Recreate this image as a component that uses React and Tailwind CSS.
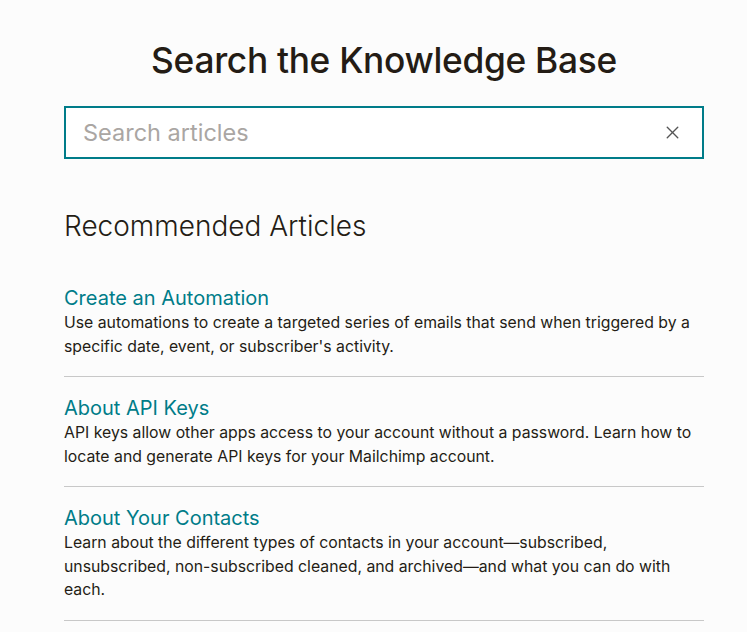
import { X } from 'lucide-react'

const articles = [
  {
    title: 'Create an Automation',
    text: "Use automations to create a targeted series of emails that send when triggered by a specific date, event, or subscriber's activity.",
  },
  {
    title: 'About API Keys',
    text: 'API keys allow other apps access to your account without a password. Learn how to locate and generate API keys for your Mailchimp account.',
  },
  {
    title: 'About Your Contacts',
    text: 'Learn about the different types of contacts in your account—subscribed, unsubscribed, non-subscribed cleaned, and archived—and what you can do with each.',
  },
]

export default function App() {
  return (
    <div className="min-h-screen bg-[#fcfcfc] text-[#241c15] font-['Inter',sans-serif]">
      <div className="w-[640px] ml-[64px] pt-[38px]">
        <h1 className="text-center text-[35.3px] leading-[46px] font-medium tracking-[-0.3px]">
          Search the Knowledge Base
        </h1>

        <div className="mt-[22px] h-[53px] border-2 border-[#007c89] bg-white flex items-center pl-[17px] pr-[20px]">
          <input
            className="flex-1 bg-transparent outline-none text-[23.5px] placeholder:text-[#aaa6a3]"
            placeholder="Search articles"
          />
          <X size={21} strokeWidth={1.6} className="text-[#555] translate-x-px" />
        </div>

        <h2 className="mt-[49px] text-[28px] leading-[36px] font-light">Recommended Articles</h2>

        <div className="mt-[42px]">
          {articles.map((a, i) => (
            <div key={a.title} className={i === 0 ? 'pb-[18px] border-b border-[#c8c8c8]' : 'pt-[19px] pb-[18px] border-b border-[#c8c8c8]'}>
              <div className="text-[20px] leading-[25px] text-[#007c89]">{a.title}</div>
              <p className="text-[15.8px] leading-[23.5px]">{a.text}</p>
            </div>
          ))}
        </div>
      </div>
    </div>
  )
}
